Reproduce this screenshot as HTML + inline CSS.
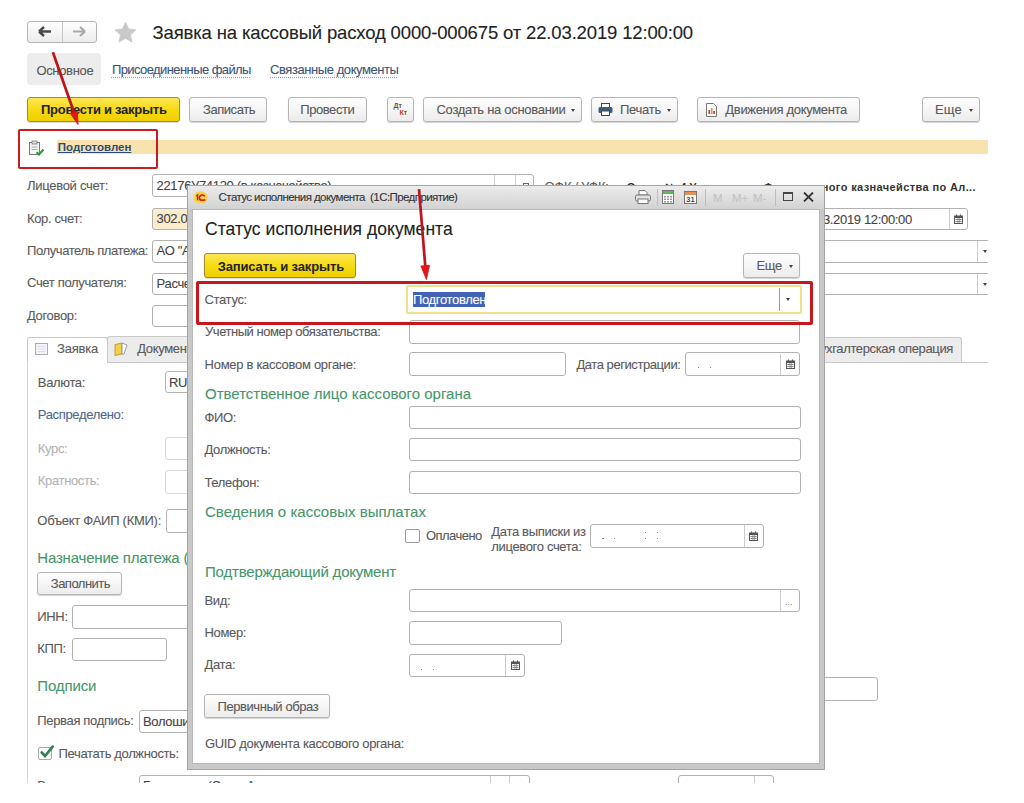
<!DOCTYPE html>
<html><head><meta charset="utf-8"><style>
html,body{margin:0;padding:0;}
body{width:1024px;height:803px;position:relative;overflow:hidden;background:#fff;font-family:"Liberation Sans", sans-serif;}
.t{position:absolute;white-space:nowrap;-webkit-text-stroke:0.1px currentColor;}
.r{position:absolute;}
</style></head><body>
<div class="r" style="left:27px;top:20.5px;width:70px;height:22.5px;border:1px solid #b5b5b5;border-radius:3px;background:linear-gradient(#ffffff,#ececec);box-sizing:border-box;box-shadow:0 1px 1px rgba(0,0,0,0.18);box-shadow:none;"></div>
<div class="r" style="left:62px;top:21.5px;width:1px;height:20.5px;background:#c8c8c8;"></div>
<svg class="r" style="left:37px;top:25px" width="16" height="13" viewBox="0 0 16 13"><path d="M2 6.5H14M2 6.5L7 2M2 6.5L7 11" stroke="#4a4a4a" stroke-width="2.4" fill="none"/></svg>
<svg class="r" style="left:70.5px;top:25px" width="16" height="13" viewBox="0 0 16 13"><path d="M2 6.5H14M14 6.5L9 2M14 6.5L9 11" stroke="#a9a9a9" stroke-width="2.2" fill="none"/></svg>
<svg class="r" style="left:114px;top:22px" width="23" height="21" viewBox="0 0 23 21"><path d="M11.50 0.20L14.62 6.91L21.96 7.80L16.54 12.84L17.97 20.10L11.50 16.50L5.03 20.10L6.46 12.84L1.04 7.80L8.38 6.91Z" fill="#c9c9c9" stroke="#c9c9c9" stroke-width="0.8" stroke-linejoin="round"/></svg>
<div class="t" style="left:152.5px;top:21.89px;font-size:18.5px;line-height:22.2px;color:#222;font-weight:400;letter-spacing:-0.148px;">Заявка на кассовый расход 0000-000675 от 22.03.2019 12:00:00</div>
<div class="r" style="left:27px;top:53px;width:74px;height:32px;background:#ededed;border-radius:4px;"></div>
<div class="t" style="left:36.4px;top:62.50px;font-size:13px;line-height:15.6px;color:#5a5a5a;font-weight:400;letter-spacing:-0.322px;">Основное</div>
<div class="t" style="left:111.9px;top:62.40px;font-size:13px;line-height:15.6px;color:#3b5578;font-weight:400;letter-spacing:-0.579px;text-decoration:underline dotted #8aa3c8;text-underline-offset:2px;">Присоединенные файлы</div>
<div class="t" style="left:270px;top:62.40px;font-size:13px;line-height:15.6px;color:#3b5578;font-weight:400;letter-spacing:-0.425px;text-decoration:underline dotted #8aa3c8;text-underline-offset:2px;">Связанные документы</div>
<div class="r" style="left:27px;top:97px;width:153px;height:25px;border:1px solid #a08c28;border-radius:3px;background:linear-gradient(#fbe656,#f6da0c 55%,#efd000);box-sizing:border-box;box-shadow:0 1px 1px rgba(0,0,0,0.15);"></div>
<div class="t" style="left:41px;top:102.30px;font-size:13px;line-height:15.6px;color:#222;font-weight:700;letter-spacing:-0.258px;-webkit-text-stroke:0;">Провести и закрыть</div>
<div class="r" style="left:189px;top:97px;width:78px;height:25px;border:1px solid #b5b5b5;border-radius:3px;background:linear-gradient(#ffffff,#ececec);box-sizing:border-box;box-shadow:0 1px 1px rgba(0,0,0,0.18);"></div>
<div class="t" style="left:203px;top:102.30px;font-size:13px;line-height:15.6px;color:#5a5a5a;font-weight:400;letter-spacing:-0.445px;">Записать</div>
<div class="r" style="left:287.5px;top:97px;width:79.0px;height:25px;border:1px solid #b5b5b5;border-radius:3px;background:linear-gradient(#ffffff,#ececec);box-sizing:border-box;box-shadow:0 1px 1px rgba(0,0,0,0.18);"></div>
<div class="t" style="left:300.3px;top:102.30px;font-size:13px;line-height:15.6px;color:#5a5a5a;font-weight:400;letter-spacing:-0.439px;">Провести</div>
<div class="r" style="left:386.5px;top:97px;width:27.5px;height:25px;border:1px solid #b5b5b5;border-radius:3px;background:linear-gradient(#ffffff,#ececec);box-sizing:border-box;box-shadow:0 1px 1px rgba(0,0,0,0.18);"></div>
<div class="t" style="left:393.5px;top:101.87px;font-size:7px;line-height:8.4px;color:#5a5a5a;font-weight:700;letter-spacing:0.000px;-webkit-text-stroke:0;">Дт</div>
<div class="t" style="left:399.5px;top:109.37px;font-size:7px;line-height:8.4px;color:#c03030;font-weight:700;letter-spacing:0.000px;-webkit-text-stroke:0;">Кт</div>
<div class="r" style="left:423.4px;top:97px;width:159.10000000000002px;height:25px;border:1px solid #b5b5b5;border-radius:3px;background:linear-gradient(#ffffff,#ececec);box-sizing:border-box;box-shadow:0 1px 1px rgba(0,0,0,0.18);"></div>
<div class="t" style="left:436.5px;top:102.30px;font-size:13px;line-height:15.6px;color:#5a5a5a;font-weight:400;letter-spacing:-0.294px;">Создать на основании</div>
<div class="r" style="left:571.0px;top:109.25px;width:0;height:0;border-left:2.5px solid transparent;border-right:2.5px solid transparent;border-top:3px solid #444;"></div>
<div class="r" style="left:591px;top:97px;width:87px;height:25px;border:1px solid #b5b5b5;border-radius:3px;background:linear-gradient(#ffffff,#ececec);box-sizing:border-box;box-shadow:0 1px 1px rgba(0,0,0,0.18);"></div>
<svg class="r" style="left:598px;top:103px" width="15" height="13" viewBox="0 0 15 13"><rect x="3.5" y="0.5" width="8" height="4" fill="#fff" stroke="#445"/><rect x="0.5" y="4" width="14" height="6" rx="1.5" fill="#3e5d7c"/><rect x="3.5" y="8" width="8" height="4.5" fill="#fff" stroke="#445"/></svg>
<div class="t" style="left:620px;top:102.30px;font-size:13px;line-height:15.6px;color:#5a5a5a;font-weight:400;letter-spacing:-0.266px;">Печать</div>
<div class="r" style="left:666.5px;top:109.25px;width:0;height:0;border-left:2.5px solid transparent;border-right:2.5px solid transparent;border-top:3px solid #444;"></div>
<div class="r" style="left:697px;top:97px;width:163px;height:25px;border:1px solid #b5b5b5;border-radius:3px;background:linear-gradient(#ffffff,#ececec);box-sizing:border-box;box-shadow:0 1px 1px rgba(0,0,0,0.18);"></div>
<svg class="r" style="left:705px;top:103px" width="13" height="14" viewBox="0 0 13 14"><path d="M1.5 0.5H8.5L11.5 3.5V13.5H1.5Z" fill="#fff" stroke="#777"/><rect x="3.5" y="7" width="1.6" height="4" fill="#c33"/><rect x="6" y="5" width="1.6" height="6" fill="#d94"/><rect x="8.3" y="8" width="1.6" height="3" fill="#c33"/></svg>
<div class="t" style="left:725.3px;top:102.30px;font-size:13px;line-height:15.6px;color:#5a5a5a;font-weight:400;letter-spacing:-0.316px;">Движения документа</div>
<div class="r" style="left:922px;top:97px;width:58px;height:25px;border:1px solid #b5b5b5;border-radius:3px;background:linear-gradient(#ffffff,#ececec);box-sizing:border-box;box-shadow:0 1px 1px rgba(0,0,0,0.18);"></div>
<div class="t" style="left:935px;top:102.30px;font-size:13px;line-height:15.6px;color:#5a5a5a;font-weight:400;letter-spacing:0.182px;">Еще</div>
<div class="r" style="left:968.5px;top:109.25px;width:0;height:0;border-left:2.5px solid transparent;border-right:2.5px solid transparent;border-top:3px solid #444;"></div>
<div class="r" style="left:56.5px;top:139.5px;width:931.5px;height:14.199999999999989px;background:#f8e2ad;"></div>
<svg class="r" style="left:28px;top:140px" width="17" height="17" viewBox="0 0 17 17"><rect x="1.5" y="2.5" width="10" height="12" fill="#f4f4f4" stroke="#777"/><rect x="4" y="1" width="5" height="3" fill="#ddd" stroke="#777" stroke-width="0.8"/><path d="M3.5 7H9.5M3.5 9.5H9.5" stroke="#aaa"/><path d="M8.5 12.2L11 14.5L15.5 9.5" stroke="#2c9a3a" stroke-width="2.2" fill="none"/></svg>
<div class="t" style="left:57.8px;top:140.72px;font-size:11.5px;line-height:13.8px;color:#2f4a78;font-weight:700;letter-spacing:-0.012px;-webkit-text-stroke:0;text-decoration:underline;">Подготовлен</div>
<div class="t" style="left:27px;top:178.30px;font-size:13px;line-height:15.6px;color:#5a5a5a;font-weight:400;letter-spacing:-0.284px;">Лицевой счет:</div>
<div class="r" style="left:152.4px;top:174.3px;width:381.6px;height:23.19999999999999px;border:1px solid #b2b2b2;border-radius:3px;background:#fff;box-sizing:border-box;"></div>
<div class="r" style="left:494px;top:175px;width:1px;height:22px;background:#ccc;"></div>
<div class="r" style="left:514.5px;top:175px;width:1.0px;height:22px;background:#ccc;"></div>
<div class="r" style="left:523px;top:183px;width:5.5px;height:9px;border:1px solid #666;box-sizing:border-box;background:#fff;"></div>
<div class="t" style="left:156.6px;top:178.20px;font-size:13px;line-height:15.6px;color:#444;font-weight:400;letter-spacing:-0.340px;">22176У74120 (в казначействе)</div>
<div class="t" style="left:544.6px;top:179.10px;font-size:13px;line-height:15.6px;color:#5a5a5a;font-weight:400;letter-spacing:-0.340px;">ОФК / УФК:</div>
<div class="t" style="left:626.8px;top:180.99px;font-size:11px;line-height:13.2px;color:#333;font-weight:700;letter-spacing:0.000px;-webkit-text-stroke:0;">Отдел</div>
<div class="t" style="left:665px;top:180.99px;font-size:11px;line-height:13.2px;color:#333;font-weight:700;letter-spacing:0.000px;-webkit-text-stroke:0;">№ 4 Управления</div>
<div class="t" style="left:763.5px;top:180.99px;font-size:11px;line-height:13.2px;color:#333;font-weight:700;letter-spacing:0.380px;-webkit-text-stroke:0;">Федерального казначейства по Ал...</div>
<div class="t" style="left:27px;top:210.70px;font-size:13px;line-height:15.6px;color:#5a5a5a;font-weight:400;letter-spacing:-0.340px;">Кор. счет:</div>
<div class="r" style="left:152.4px;top:207.7px;width:267.6px;height:22.700000000000017px;border:1px solid #b2b2b2;border-radius:3px;background:#fff;box-sizing:border-box;background:#fbeccb;"></div>
<div class="t" style="left:156.6px;top:211.20px;font-size:13px;line-height:15.6px;color:#444;font-weight:400;letter-spacing:-0.340px;">302.05.01</div>
<div class="r" style="left:700px;top:207.5px;width:268.29999999999995px;height:22.5px;border:1px solid #b2b2b2;border-radius:3px;background:#fff;box-sizing:border-box;"></div>
<div class="r" style="left:948.6px;top:208.5px;width:1.0px;height:20.5px;background:#ccc;"></div>
<svg class="r" style="left:954.0px;top:214px" width="9" height="10" viewBox="0 0 9 10"><rect x="0.5" y="2" width="8" height="7.5" fill="#fff" stroke="#555" stroke-width="1"/><rect x="0.5" y="2" width="8" height="2" fill="#555"/><rect x="2" y="0.5" width="1" height="2" fill="#555"/><rect x="6" y="0.5" width="1" height="2" fill="#555"/><g fill="#888"><rect x="1.5" y="5" width="6" height="1"/><rect x="1.5" y="7" width="6" height="1"/><rect x="3.5" y="4" width="0.8" height="5"/><rect x="5.3" y="4" width="0.8" height="5"/></g></svg>
<div class="t" style="left:799px;top:211.50px;font-size:13px;line-height:15.6px;color:#444;font-weight:400;letter-spacing:-0.340px;">22.03.2019 12:00:00</div>
<div class="t" style="left:27px;top:242.70px;font-size:13px;line-height:15.6px;color:#5a5a5a;font-weight:400;letter-spacing:-0.404px;">Получатель платежа:</div>
<div class="r" style="left:152.4px;top:240px;width:847.6px;height:22.80000000000001px;border:1px solid #b2b2b2;border-radius:3px;background:#fff;box-sizing:border-box;"></div>
<div class="r" style="left:976.7px;top:241px;width:1.0px;height:21px;background:#ccc;"></div>
<div class="r" style="left:983.0px;top:250.25px;width:0;height:0;border-left:2.5px solid transparent;border-right:2.5px solid transparent;border-top:3px solid #444;"></div>
<div class="t" style="left:156.6px;top:243.20px;font-size:13px;line-height:15.6px;color:#444;font-weight:400;letter-spacing:-0.340px;">АО "Альфа"</div>
<div class="t" style="left:27px;top:275.30px;font-size:13px;line-height:15.6px;color:#5a5a5a;font-weight:400;letter-spacing:-0.340px;">Счет получателя:</div>
<div class="r" style="left:152.4px;top:272.7px;width:847.6px;height:22.30000000000001px;border:1px solid #b2b2b2;border-radius:3px;background:#fff;box-sizing:border-box;"></div>
<div class="r" style="left:976.7px;top:273.7px;width:1.0px;height:20.30000000000001px;background:#ccc;"></div>
<div class="r" style="left:983.0px;top:282.75px;width:0;height:0;border-left:2.5px solid transparent;border-right:2.5px solid transparent;border-top:3px solid #444;"></div>
<div class="t" style="left:156.6px;top:275.70px;font-size:13px;line-height:15.6px;color:#444;font-weight:400;letter-spacing:-0.340px;">Расчетный</div>
<div class="t" style="left:27px;top:307.70px;font-size:13px;line-height:15.6px;color:#5a5a5a;font-weight:400;letter-spacing:-0.340px;">Договор:</div>
<div class="r" style="left:152.4px;top:304.5px;width:247.6px;height:22.69999999999999px;border:1px solid #b2b2b2;border-radius:3px;background:#fff;box-sizing:border-box;"></div>
<div class="r" style="left:107px;top:336.3px;width:293px;height:26.19999999999999px;background:#ececec;border:1px solid #c9c9c9;border-bottom:none;box-sizing:border-box;border-radius:3px 3px 0 0;"></div>
<div class="r" style="left:800px;top:336.6px;width:162.29999999999995px;height:25.899999999999977px;background:#ececec;border:1px solid #c9c9c9;border-bottom:none;box-sizing:border-box;border-radius:3px 3px 0 0;"></div>
<div class="t" style="left:812px;top:341.00px;font-size:13px;line-height:15.6px;color:#5a5a5a;font-weight:400;letter-spacing:-0.357px;">Бухгалтерская операция</div>
<div class="r" style="left:107px;top:362px;width:881px;height:1px;background:#c9c9c9;"></div>
<div class="r" style="left:27px;top:336.5px;width:81px;height:26.5px;background:#fff;border:1px solid #c9c9c9;border-bottom:none;box-sizing:border-box;border-radius:3px 3px 0 0;"></div>
<div class="r" style="left:27px;top:362px;width:1px;height:420.5px;background:#d6d6d6;"></div>
<svg class="r" style="left:35px;top:343px" width="14" height="13" viewBox="0 0 14 13"><rect x="0.5" y="0.5" width="12" height="11" fill="#f2f4f8" stroke="#aab"/><path d="M2.5 3.5H10.5M2.5 6H10.5M2.5 8.5H10.5" stroke="#dde"/></svg>
<div class="t" style="left:57px;top:341.00px;font-size:13px;line-height:15.6px;color:#5a5a5a;font-weight:400;letter-spacing:-0.206px;">Заявка</div>
<svg class="r" style="left:114px;top:342px" width="15" height="14" viewBox="0 0 15 14"><path d="M1 2.5L8 1V12L1 13.5Z" fill="#f3cf4d" stroke="#b09020" stroke-width="0.8"/><path d="M8 1L13 3L10 12H8Z" fill="#fff" stroke="#888" stroke-width="0.8"/></svg>
<div class="t" style="left:137.2px;top:340.70px;font-size:13px;line-height:15.6px;color:#5a5a5a;font-weight:400;letter-spacing:-0.340px;">Документы</div>
<div class="t" style="left:37.8px;top:374.70px;font-size:13px;line-height:15.6px;color:#5a5a5a;font-weight:400;letter-spacing:-0.340px;">Валюта:</div>
<div class="r" style="left:165.2px;top:370.5px;width:134.8px;height:22.80000000000001px;border:1px solid #b2b2b2;border-radius:3px;background:#fff;box-sizing:border-box;"></div>
<div class="t" style="left:169px;top:375.20px;font-size:13px;line-height:15.6px;color:#444;font-weight:400;letter-spacing:-0.340px;">RUB</div>
<div class="t" style="left:37.8px;top:406.70px;font-size:13px;line-height:15.6px;color:#4b6890;font-weight:400;letter-spacing:-0.340px;">Распределено:</div>
<div class="t" style="left:37.8px;top:440.70px;font-size:13px;line-height:15.6px;color:#b3b3b3;font-weight:400;letter-spacing:-0.340px;">Курс:</div>
<div class="r" style="left:165px;top:437.3px;width:135px;height:22.69999999999999px;border:1px solid #b2b2b2;border-radius:3px;background:#fff;box-sizing:border-box;border-color:#d8d8d8;"></div>
<div class="t" style="left:37.8px;top:472.70px;font-size:13px;line-height:15.6px;color:#b3b3b3;font-weight:400;letter-spacing:-0.340px;">Кратность:</div>
<div class="r" style="left:165px;top:470px;width:135px;height:23.5px;border:1px solid #b2b2b2;border-radius:3px;background:#fff;box-sizing:border-box;border-color:#d8d8d8;"></div>
<div class="t" style="left:37.3px;top:513.30px;font-size:13px;line-height:15.6px;color:#5a5a5a;font-weight:400;letter-spacing:-0.265px;">Объект ФАИП (КМИ):</div>
<div class="r" style="left:165.6px;top:509px;width:134.4px;height:24px;border:1px solid #b2b2b2;border-radius:3px;background:#fff;box-sizing:border-box;"></div>
<div class="t" style="left:37.3px;top:549.40px;font-size:15px;line-height:18.0px;color:#46966a;font-weight:400;letter-spacing:-0.191px;">Назначение платежа (</div>
<div class="r" style="left:37.3px;top:571.7px;width:85.2px;height:23.299999999999955px;border:1px solid #b5b5b5;border-radius:3px;background:linear-gradient(#ffffff,#ececec);box-sizing:border-box;box-shadow:0 1px 1px rgba(0,0,0,0.18);"></div>
<div class="t" style="left:50.8px;top:576.00px;font-size:13px;line-height:15.6px;color:#5a5a5a;font-weight:400;letter-spacing:-0.514px;">Заполнить</div>
<div class="t" style="left:37.3px;top:608.70px;font-size:13px;line-height:15.6px;color:#5a5a5a;font-weight:400;letter-spacing:-0.340px;">ИНН:</div>
<div class="r" style="left:71.7px;top:605px;width:228.3px;height:23.5px;border:1px solid #b2b2b2;border-radius:3px;background:#fff;box-sizing:border-box;"></div>
<div class="t" style="left:37.3px;top:640.70px;font-size:13px;line-height:15.6px;color:#5a5a5a;font-weight:400;letter-spacing:-0.340px;">КПП:</div>
<div class="r" style="left:71.7px;top:637.5px;width:95.7px;height:23.0px;border:1px solid #b2b2b2;border-radius:3px;background:#fff;box-sizing:border-box;"></div>
<div class="t" style="left:37.3px;top:677.30px;font-size:15px;line-height:18.0px;color:#46966a;font-weight:400;letter-spacing:-0.134px;">Подписи</div>
<div class="t" style="left:37.3px;top:713.40px;font-size:13px;line-height:15.6px;color:#5a5a5a;font-weight:400;letter-spacing:-0.340px;">Первая подпись:</div>
<div class="r" style="left:139px;top:710px;width:161px;height:23.200000000000045px;border:1px solid #b2b2b2;border-radius:3px;background:#fff;box-sizing:border-box;"></div>
<div class="t" style="left:143px;top:713.70px;font-size:13px;line-height:15.6px;color:#444;font-weight:400;letter-spacing:-0.340px;">Волошина</div>
<div class="r" style="left:38.2px;top:746.8px;width:14.299999999999997px;height:13.700000000000045px;border:1px solid #a9a9a9;border-radius:2px;background:#fff;box-sizing:border-box;"></div>
<svg class="r" style="left:38px;top:744px" width="17" height="16" viewBox="0 0 17 16"><path d="M3.7 8.5L7 12L14.7 2.6" stroke="#2f7d52" stroke-width="2.6" fill="none" stroke-linecap="round"/></svg>
<div class="t" style="left:58.6px;top:746.00px;font-size:13px;line-height:15.6px;color:#5a5a5a;font-weight:400;letter-spacing:-0.359px;">Печатать должность:</div>
<div class="r" style="left:139px;top:774.6px;width:391px;height:25.399999999999977px;border:1px solid #b2b2b2;border-radius:3px;background:#fff;box-sizing:border-box;"></div>
<div class="r" style="left:489.6px;top:775.5px;width:1.0px;height:24.5px;background:#ccc;"></div>
<div class="r" style="left:509px;top:775.5px;width:1px;height:24.5px;background:#ccc;"></div>
<div class="t" style="left:37.3px;top:778.20px;font-size:13px;line-height:15.6px;color:#5a5a5a;font-weight:400;letter-spacing:-0.340px;">Вторая подпись:</div>
<div class="t" style="left:143px;top:778.20px;font-size:13px;line-height:15.6px;color:#444;font-weight:400;letter-spacing:-0.340px;">Б</div>
<div class="t" style="left:207.5px;top:778.20px;font-size:13px;line-height:15.6px;color:#444;font-weight:400;letter-spacing:-0.340px;">(Ст</div>
<div class="t" style="left:246.5px;top:778.20px;font-size:13px;line-height:15.6px;color:#444;font-weight:400;letter-spacing:-0.340px;">А</div>
<div class="t" style="left:543.5px;top:779.70px;font-size:13px;line-height:15.6px;color:#5a5a5a;font-weight:400;letter-spacing:-0.340px;">Р</div>
<div class="r" style="left:677.6px;top:774.5px;width:96.19999999999993px;height:25.5px;border:1px solid #b2b2b2;border-radius:3px;background:#fff;box-sizing:border-box;"></div>
<div class="r" style="left:754.3px;top:775.5px;width:1.0px;height:24.5px;background:#ccc;"></div>
<div class="r" style="left:815px;top:677px;width:62.700000000000045px;height:23.799999999999955px;border:1px solid #b2b2b2;border-radius:3px;background:#fff;box-sizing:border-box;"></div>
<div class="r" style="left:988px;top:160px;width:36px;height:643px;background:#fff;"></div>
<div class="r" style="left:0px;top:782.5px;width:1024px;height:20.5px;background:#fff;"></div>
<div class="r" style="left:187px;top:185px;width:638px;height:584.5px;background:#c8c8c8;border:1px solid #a4a4a4;box-sizing:border-box;"></div>
<div class="r" style="left:188px;top:186px;width:636px;height:22.5px;background:linear-gradient(#ececec,#d2d2d2);"></div>
<div class="r" style="left:192px;top:208.5px;width:628px;height:555.5px;background:#fff;border:1px solid #b9b9b9;box-sizing:border-box;"></div>
<svg class="r" style="left:193px;top:191px" width="15" height="13" viewBox="0 0 15 13"><ellipse cx="7.5" cy="6.5" rx="7.2" ry="6.2" fill="#f5d24a"/><path d="M3.2 5L4.6 4V9.3" stroke="#d01c18" stroke-width="1.5" fill="none"/><path d="M11.8 5.2A3 2.6 0 1 0 11.8 8.2" stroke="#d01c18" stroke-width="1.6" fill="none"/><path d="M6.5 9.2H12.5" stroke="#d01c18" stroke-width="1"/></svg>
<div class="t" style="left:218.6px;top:191.42px;font-size:11.5px;line-height:13.8px;color:#333;font-weight:400;letter-spacing:-0.576px;">Статус исполнения документа&nbsp; (1С:Предприятие)</div>
<svg class="r" style="left:635px;top:190px" width="16" height="14" viewBox="0 0 16 14"><path d="M4 0.5H10L12 2.5V5H4Z" fill="#fff" stroke="#777"/><rect x="0.5" y="5" width="15" height="6" rx="1.5" fill="#e0e0e0" stroke="#777"/><rect x="3" y="9" width="10" height="4.5" fill="#fff" stroke="#777"/></svg>
<div class="r" style="left:656.5px;top:189px;width:1.0px;height:17px;background:#bdbdbd;"></div>
<svg class="r" style="left:662px;top:190px" width="12" height="14" viewBox="0 0 12 14"><rect x="0.5" y="0.5" width="11" height="13" fill="#fff" stroke="#777"/><rect x="1" y="1" width="10" height="3" fill="#5cb85c"/><g fill="#999"><rect x="2" y="6" width="2" height="1.5"/><rect x="5" y="6" width="2" height="1.5"/><rect x="8" y="6" width="2" height="1.5"/><rect x="2" y="8.5" width="2" height="1.5"/><rect x="5" y="8.5" width="2" height="1.5"/><rect x="8" y="8.5" width="2" height="1.5"/><rect x="2" y="11" width="2" height="1.5"/><rect x="5" y="11" width="2" height="1.5"/><rect x="8" y="11" width="2" height="1.5"/></g></svg>
<svg class="r" style="left:684px;top:190px" width="13" height="14" viewBox="0 0 13 14"><rect x="0.5" y="1.5" width="12" height="12" fill="#fff" stroke="#777"/><rect x="1" y="2" width="11" height="3" fill="#e8905a"/><text x="2.3" y="12" font-family="Liberation Sans" font-size="7.5" font-weight="700" fill="#445">31</text></svg>
<div class="r" style="left:705px;top:189px;width:1px;height:17px;background:#bdbdbd;"></div>
<div class="t" style="left:713px;top:191.62px;font-size:11.5px;line-height:13.8px;color:#c3c3c3;font-weight:400;letter-spacing:0.000px;">M</div>
<div class="t" style="left:732px;top:191.62px;font-size:11.5px;line-height:13.8px;color:#c3c3c3;font-weight:400;letter-spacing:0.000px;">M+</div>
<div class="t" style="left:753px;top:191.62px;font-size:11.5px;line-height:13.8px;color:#c3c3c3;font-weight:400;letter-spacing:0.000px;">M-</div>
<div class="r" style="left:775px;top:189px;width:1px;height:17px;background:#bdbdbd;"></div>
<div class="r" style="left:782.6px;top:192.4px;width:10.899999999999977px;height:9.099999999999994px;border:1.5px solid #444;border-top-width:2px;box-sizing:border-box;"></div>
<svg class="r" style="left:803px;top:192px" width="11" height="10" viewBox="0 0 11 10"><path d="M1 0.5L10 9.5M10 0.5L1 9.5" stroke="#333" stroke-width="1.8"/></svg>
<div class="t" style="left:205px;top:219.24px;font-size:17.5px;line-height:21.0px;color:#222;font-weight:400;letter-spacing:0.057px;">Статус исполнения документа</div>
<div class="r" style="left:204.4px;top:253.2px;width:152.1px;height:24.400000000000034px;border:1px solid #a08c28;border-radius:3px;background:linear-gradient(#fbe656,#f6da0c 55%,#efd000);box-sizing:border-box;box-shadow:0 1px 1px rgba(0,0,0,0.15);"></div>
<div class="t" style="left:217.7px;top:258.80px;font-size:13px;line-height:15.6px;color:#222;font-weight:700;letter-spacing:-0.141px;-webkit-text-stroke:0;">Записать и закрыть</div>
<div class="r" style="left:743.2px;top:253.3px;width:57.09999999999991px;height:24.399999999999977px;border:1px solid #b5b5b5;border-radius:3px;background:linear-gradient(#ffffff,#ececec);box-sizing:border-box;box-shadow:0 1px 1px rgba(0,0,0,0.18);"></div>
<div class="t" style="left:756.4px;top:258.30px;font-size:13px;line-height:15.6px;color:#5a5a5a;font-weight:400;letter-spacing:-0.340px;">Еще</div>
<div class="r" style="left:788.8px;top:265.25px;width:0;height:0;border-left:2.5px solid transparent;border-right:2.5px solid transparent;border-top:3px solid #444;"></div>
<div class="t" style="left:204.5px;top:292.10px;font-size:13px;line-height:15.6px;color:#5a5a5a;font-weight:400;letter-spacing:-0.340px;">Статус:</div>
<div class="r" style="left:406.3px;top:284.5px;width:396.09999999999997px;height:29.100000000000023px;border:2px solid #efe08a;background:#fff;box-sizing:border-box;border-radius:2px;"></div>
<div class="r" style="left:779.3px;top:287.5px;width:1.0px;height:23.5px;background:#999;"></div>
<div class="r" style="left:786.3px;top:297.55px;width:0;height:0;border-left:2.5px solid transparent;border-right:2.5px solid transparent;border-top:3px solid #444;"></div>
<div class="r" style="left:412.8px;top:291.5px;width:72.69999999999999px;height:15.100000000000023px;background:#4262b6;"></div>
<div class="t" style="left:413px;top:291.70px;font-size:13px;line-height:15.6px;color:#fff;font-weight:400;letter-spacing:-0.340px;">Подготовлен</div>
<div class="t" style="left:205px;top:324.00px;font-size:13px;line-height:15.6px;color:#5a5a5a;font-weight:400;letter-spacing:-0.452px;">Учетный номер обязательства:</div>
<div class="r" style="left:409px;top:320.3px;width:390.5px;height:23.399999999999977px;border:1px solid #b2b2b2;border-radius:3px;background:#fff;box-sizing:border-box;"></div>
<div class="t" style="left:204.6px;top:356.70px;font-size:13px;line-height:15.6px;color:#5a5a5a;font-weight:400;letter-spacing:-0.293px;">Номер в кассовом органе:</div>
<div class="r" style="left:409px;top:352.2px;width:157px;height:23.80000000000001px;border:1px solid #b2b2b2;border-radius:3px;background:#fff;box-sizing:border-box;"></div>
<div class="t" style="left:576.4px;top:356.70px;font-size:13px;line-height:15.6px;color:#5a5a5a;font-weight:400;letter-spacing:-0.433px;">Дата регистрации:</div>
<div class="r" style="left:684.8px;top:352.2px;width:115.5px;height:23.80000000000001px;border:1px solid #b2b2b2;border-radius:3px;background:#fff;box-sizing:border-box;"></div>
<div class="r" style="left:780px;top:353.6px;width:1px;height:21.099999999999966px;background:#ccc;"></div>
<svg class="r" style="left:785.8px;top:359px" width="9" height="10" viewBox="0 0 9 10"><rect x="0.5" y="2" width="8" height="7.5" fill="#fff" stroke="#555" stroke-width="1"/><rect x="0.5" y="2" width="8" height="2" fill="#555"/><rect x="2" y="0.5" width="1" height="2" fill="#555"/><rect x="6" y="0.5" width="1" height="2" fill="#555"/><g fill="#888"><rect x="1.5" y="5" width="6" height="1"/><rect x="1.5" y="7" width="6" height="1"/><rect x="3.5" y="4" width="0.8" height="5"/><rect x="5.3" y="4" width="0.8" height="5"/></g></svg>
<div class="r" style="left:697.8px;top:367.1px;width:1.4px;height:1.4px;background:#8a8a8a;"></div>
<div class="r" style="left:709.8px;top:367.1px;width:1.4px;height:1.4px;background:#8a8a8a;"></div>
<div class="t" style="left:205px;top:384.80px;font-size:15px;line-height:18.0px;color:#46966a;font-weight:400;letter-spacing:-0.006px;">Ответственное лицо кассового органа</div>
<div class="t" style="left:204.5px;top:409.70px;font-size:13px;line-height:15.6px;color:#5a5a5a;font-weight:400;letter-spacing:-0.340px;">ФИО:</div>
<div class="r" style="left:409px;top:406.1px;width:391.6px;height:23.099999999999966px;border:1px solid #b2b2b2;border-radius:3px;background:#fff;box-sizing:border-box;"></div>
<div class="t" style="left:204.5px;top:442.30px;font-size:13px;line-height:15.6px;color:#5a5a5a;font-weight:400;letter-spacing:-0.340px;">Должность:</div>
<div class="r" style="left:409px;top:438.1px;width:391.6px;height:23.299999999999955px;border:1px solid #b2b2b2;border-radius:3px;background:#fff;box-sizing:border-box;"></div>
<div class="t" style="left:204.5px;top:474.70px;font-size:13px;line-height:15.6px;color:#5a5a5a;font-weight:400;letter-spacing:-0.340px;">Телефон:</div>
<div class="r" style="left:409px;top:470.6px;width:391.6px;height:23.099999999999966px;border:1px solid #b2b2b2;border-radius:3px;background:#fff;box-sizing:border-box;"></div>
<div class="t" style="left:205px;top:503.10px;font-size:15px;line-height:18.0px;color:#46966a;font-weight:400;letter-spacing:0.016px;">Сведения о кассовых выплатах</div>
<div class="r" style="left:405.2px;top:529.2px;width:14.5px;height:13.5px;border:1px solid #9a9a9a;border-radius:2px;background:#fff;box-sizing:border-box;"></div>
<div class="t" style="left:426px;top:527.50px;font-size:13px;line-height:15.6px;color:#5a5a5a;font-weight:400;letter-spacing:-0.549px;">Оплачено</div>
<div class="t" style="left:491.3px;top:524.00px;font-size:13px;line-height:15.6px;color:#5a5a5a;font-weight:400;letter-spacing:-0.322px;">Дата выписки из</div>
<div class="t" style="left:491.3px;top:538.70px;font-size:13px;line-height:15.6px;color:#5a5a5a;font-weight:400;letter-spacing:-0.340px;">лицевого счета:</div>
<div class="r" style="left:590.4px;top:524px;width:173.60000000000002px;height:23.5px;border:1px solid #b2b2b2;border-radius:3px;background:#fff;box-sizing:border-box;"></div>
<div class="r" style="left:743.5px;top:525px;width:1.0px;height:21.5px;background:#ccc;"></div>
<svg class="r" style="left:749.0px;top:531px" width="9" height="10" viewBox="0 0 9 10"><rect x="0.5" y="2" width="8" height="7.5" fill="#fff" stroke="#555" stroke-width="1"/><rect x="0.5" y="2" width="8" height="2" fill="#555"/><rect x="2" y="0.5" width="1" height="2" fill="#555"/><rect x="6" y="0.5" width="1" height="2" fill="#555"/><g fill="#888"><rect x="1.5" y="5" width="6" height="1"/><rect x="1.5" y="7" width="6" height="1"/><rect x="3.5" y="4" width="0.8" height="5"/><rect x="5.3" y="4" width="0.8" height="5"/></g></svg>
<div class="r" style="left:602.3px;top:537.6px;width:1.4px;height:1.4px;background:#8a8a8a;"></div>
<div class="r" style="left:614.0999999999999px;top:537.6px;width:1.4px;height:1.4px;background:#8a8a8a;"></div>
<div class="r" style="left:644.9px;top:537.6px;width:1.4px;height:1.4px;background:#8a8a8a;"></div>
<div class="r" style="left:656.5999999999999px;top:537.6px;width:1.4px;height:1.4px;background:#8a8a8a;"></div>
<div class="r" style="left:644.9px;top:532.1px;width:1.4px;height:1.4px;background:#8a8a8a;"></div>
<div class="r" style="left:656.5999999999999px;top:532.1px;width:1.4px;height:1.4px;background:#8a8a8a;"></div>
<div class="t" style="left:205px;top:562.80px;font-size:15px;line-height:18.0px;color:#46966a;font-weight:400;letter-spacing:-0.196px;">Подтверждающий документ</div>
<div class="t" style="left:204.5px;top:592.70px;font-size:13px;line-height:15.6px;color:#5a5a5a;font-weight:400;letter-spacing:-0.340px;">Вид:</div>
<div class="r" style="left:409px;top:588.5px;width:391.4px;height:23.700000000000045px;border:1px solid #b2b2b2;border-radius:3px;background:#fff;box-sizing:border-box;"></div>
<div class="r" style="left:780.4px;top:589.5px;width:1.0px;height:21.700000000000045px;background:#ccc;"></div>
<div class="t" style="left:785px;top:597.48px;font-size:9px;line-height:10.8px;color:#777;font-weight:400;letter-spacing:0.000px;">...</div>
<div class="t" style="left:204.5px;top:624.70px;font-size:13px;line-height:15.6px;color:#5a5a5a;font-weight:400;letter-spacing:-0.340px;">Номер:</div>
<div class="r" style="left:409px;top:621px;width:153.39999999999998px;height:23.5px;border:1px solid #b2b2b2;border-radius:3px;background:#fff;box-sizing:border-box;"></div>
<div class="t" style="left:204.5px;top:657.40px;font-size:13px;line-height:15.6px;color:#5a5a5a;font-weight:400;letter-spacing:-0.340px;">Дата:</div>
<div class="r" style="left:409px;top:653.5px;width:115.60000000000002px;height:23.5px;border:1px solid #b2b2b2;border-radius:3px;background:#fff;box-sizing:border-box;"></div>
<div class="r" style="left:505px;top:654.5px;width:1px;height:21.5px;background:#ccc;"></div>
<svg class="r" style="left:510.5px;top:660px" width="9" height="10" viewBox="0 0 9 10"><rect x="0.5" y="2" width="8" height="7.5" fill="#fff" stroke="#555" stroke-width="1"/><rect x="0.5" y="2" width="8" height="2" fill="#555"/><rect x="2" y="0.5" width="1" height="2" fill="#555"/><rect x="6" y="0.5" width="1" height="2" fill="#555"/><g fill="#888"><rect x="1.5" y="5" width="6" height="1"/><rect x="1.5" y="7" width="6" height="1"/><rect x="3.5" y="4" width="0.8" height="5"/><rect x="5.3" y="4" width="0.8" height="5"/></g></svg>
<div class="r" style="left:420.8px;top:668.6px;width:1.4px;height:1.4px;background:#8a8a8a;"></div>
<div class="r" style="left:432.8px;top:668.6px;width:1.4px;height:1.4px;background:#8a8a8a;"></div>
<div class="r" style="left:204.3px;top:694px;width:126.19999999999999px;height:24px;border:1px solid #b5b5b5;border-radius:3px;background:linear-gradient(#ffffff,#ececec);box-sizing:border-box;box-shadow:0 1px 1px rgba(0,0,0,0.18);"></div>
<div class="t" style="left:217.5px;top:699.00px;font-size:13px;line-height:15.6px;color:#5a5a5a;font-weight:400;letter-spacing:-0.426px;">Первичный образ</div>
<div class="t" style="left:205px;top:736.40px;font-size:13px;line-height:15.6px;color:#5a5a5a;font-weight:400;letter-spacing:-0.349px;">GUID документа кассового органа:</div>
<div class="r" style="left:18.4px;top:129px;width:139.6px;height:39.6px;border:2.6px solid #cc1a21;box-sizing:border-box;border-radius:2px;"></div>
<div class="r" style="left:195.8px;top:281.2px;width:617.2px;height:43.6px;border:3px solid #c8161d;box-sizing:border-box;border-radius:2px;"></div>
<svg class="r" style="left:0;top:0" width="1024" height="803" viewBox="0 0 1024 803"><path d="M52.9 52.3L74.2 113" stroke="#bf141b" stroke-width="2.7" fill="none"/><path d="M78.1 124.6L70.3 113.5L77.3 111.1Z" fill="#e0141a" stroke="#d0141a" stroke-width="0.8" stroke-linejoin="round"/><path d="M419 189.2L425.3 266.5" stroke="#bf141b" stroke-width="2.7" fill="none"/><path d="M426.4 279.6L420.9 266L429.6 265.3Z" fill="#e0141a" stroke="#d0141a" stroke-width="0.8" stroke-linejoin="round"/></svg>
</body></html>
